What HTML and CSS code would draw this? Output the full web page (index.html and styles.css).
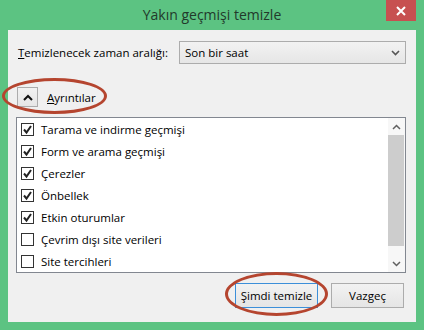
FILE: index.html
```html
<!DOCTYPE html>
<html lang="tr">
<head>
    <meta charset="UTF-8">
    <meta name="viewport" content="width=device-width, initial-scale=1.0">
    <title>Yakın geçmişi temizle</title>
    <link rel="stylesheet" href="styles.css">
</head>
<body>
    <div class="window">
        <div class="titlebar">
            <span></span>
            <span class="title">Yakın geçmişi temizle</span>
            <span class="close">
                <svg width="10" height="10" viewBox="0 0 10 10"><path d="M1 1 L9 9 M9 1 L1 9" stroke="#fff" stroke-width="2"/></svg>
            </span>
        </div>

        <div class="panel">
            <div class="range-row">
                <label class="range-label"><u>T</u>emizlenecek zaman aralığı:</label>
                <div class="select">
                    <span>Son bir saat</span>
                    <svg width="9" height="6" viewBox="0 0 9 6"><path d="M1 1 L4.5 4.5 L8 1" fill="none" stroke="#555" stroke-width="1.6"/></svg>
                </div>
            </div>

            <div class="details-row">
                <span class="details-btn">
                    <svg width="10" height="7" viewBox="0 0 10 7"><path d="M1 6 L5 2 L9 6" fill="none" stroke="#111" stroke-width="2"/></svg>
                </span>
                <span class="details-text"><u>A</u>yrıntılar</span>
                <span class="ring ring-details"></span>
            </div>

            <div class="list">
                <div class="items" id="items"></div>
                <div class="scrollbar">
                    <span class="arrow">
                        <svg width="9" height="6" viewBox="0 0 9 6"><path d="M1 5 L4.5 1.5 L8 5" fill="none" stroke="#606060" stroke-width="1.5"/></svg>
                    </span>
                    <span class="thumb"></span>
                    <span class="track"></span>
                    <span class="arrow">
                        <svg width="9" height="6" viewBox="0 0 9 6"><path d="M1 1 L4.5 4.5 L8 1" fill="none" stroke="#606060" stroke-width="1.5"/></svg>
                    </span>
                </div>
            </div>

            <div class="actions">
                <span class="btn btn-default">Şimdi temizle<span class="ring ring-clear"></span></span>
                <span class="btn">Vazgeç</span>
            </div>
        </div>
    </div>

    <script>
        const items = [
            { label: 'Tarama ve indirme geçmişi', checked: true },
            { label: 'Form ve arama geçmişi', checked: true },
            { label: 'Çerezler', checked: true },
            { label: 'Önbellek', checked: true },
            { label: 'Etkin oturumlar', checked: true },
            { label: 'Çevrim dışı site verileri', checked: false },
            { label: 'Site tercihleri', checked: false }
        ];

        const tick = '<svg width="11" height="11" viewBox="0 0 11 11"><path d="M2 5.5 L4.5 8.5 L9 2" fill="none" stroke="#222" stroke-width="2"/></svg>';

        const box = document.getElementById('items');
        items.forEach(item => {
            box.innerHTML += `<div class="item"><span class="check">${item.checked ? tick : ''}</span><span>${item.label}</span></div>`;
        });
    </script>
</body>
</html>
```

FILE: styles.css
```css
body {
    margin: 0;
    font-family: "Open Sans", "Noto Sans", sans-serif;
    font-size: 11.5px;
    color: #000;
}

.window {
    width: 424px;
    height: 330px;
    background-color: #5cc382;
    display: flex;
    flex-direction: column;
}

.titlebar {
    height: 31px;
    padding: 0 8px;
    display: grid;
    grid-template-columns: 30px 1fr 30px;
    align-items: start;
}

.title {
    text-align: center;
    font-size: 14px;
    line-height: 30px;
    color: #22392b;
}

.close {
    height: 21px;
    background-color: #c75050;
    display: flex;
    align-items: center;
    justify-content: center;
}

.panel {
    position: relative;
    flex: 1;
    margin: 0 8px 8px;
    background-color: #f0f0f0;
    padding: 11px 10px 14px 8px;
    display: flex;
    flex-direction: column;
}

.range-row {
    display: flex;
    align-items: center;
    height: 23px;
}

.range-label {
    width: 161px;
    padding-left: 2px;
}

.select {
    flex: 1;
    height: 21px;
    border: 1px solid #acacac;
    background: linear-gradient(#f2f2f2, #e6e6e6);
    display: flex;
    align-items: center;
    justify-content: space-between;
    padding: 0 5px 0 5px;
}

.details-row {
    position: relative;
    margin-top: 23px;
    display: flex;
    align-items: center;
    height: 20px;
}

.details-btn {
    width: 19px;
    height: 18px;
    margin-left: 1px;
    border: 1px solid #acacac;
    background: linear-gradient(#f2f2f2, #e6e6e6);
    display: flex;
    align-items: center;
    justify-content: center;
}

.details-text {
    margin-left: 9px;
}

.ring {
    position: absolute;
    border: 3px solid #b5452f;
    border-radius: 50%;
    pointer-events: none;
}

.ring-details {
    left: -14px;
    top: -9px;
    width: 99px;
    height: 30px;
}

.list {
    margin-top: 10px;
    height: 154px;
    border: 1px solid #828790;
    background-color: #fff;
    display: flex;
}

.items {
    flex: 1;
    padding-left: 4px;
}

.item {
    height: 22px;
    display: flex;
    align-items: center;
}

.check {
    width: 11px;
    height: 11px;
    border: 1px solid #333;
    background-color: #fff;
    margin-right: 7px;
    display: flex;
}

.scrollbar {
    width: 17px;
    display: flex;
    flex-direction: column;
    background-color: #f7f7f7;
}

.arrow {
    height: 17px;
    display: flex;
    align-items: center;
    justify-content: center;
}

.thumb {
    height: 111px;
    margin: 0 1px 0 0;
    background-color: #cdcdcd;
}

.track {
    flex: 1;
}

.actions {
    margin-top: 10px;
    display: flex;
    justify-content: flex-end;
    gap: 13px;
    padding-right: 2px;
}

.btn {
    position: relative;
    height: 23px;
    border: 1px solid #acacac;
    background: linear-gradient(#f2f2f2, #e5e5e5);
    display: flex;
    align-items: center;
    justify-content: center;
    width: 71px;
}

.btn-default {
    width: 81px;
    border-color: #3c8fd9;
}

.ring-clear {
    left: -11px;
    top: -12px;
    width: 97px;
    height: 38px;
}
```
